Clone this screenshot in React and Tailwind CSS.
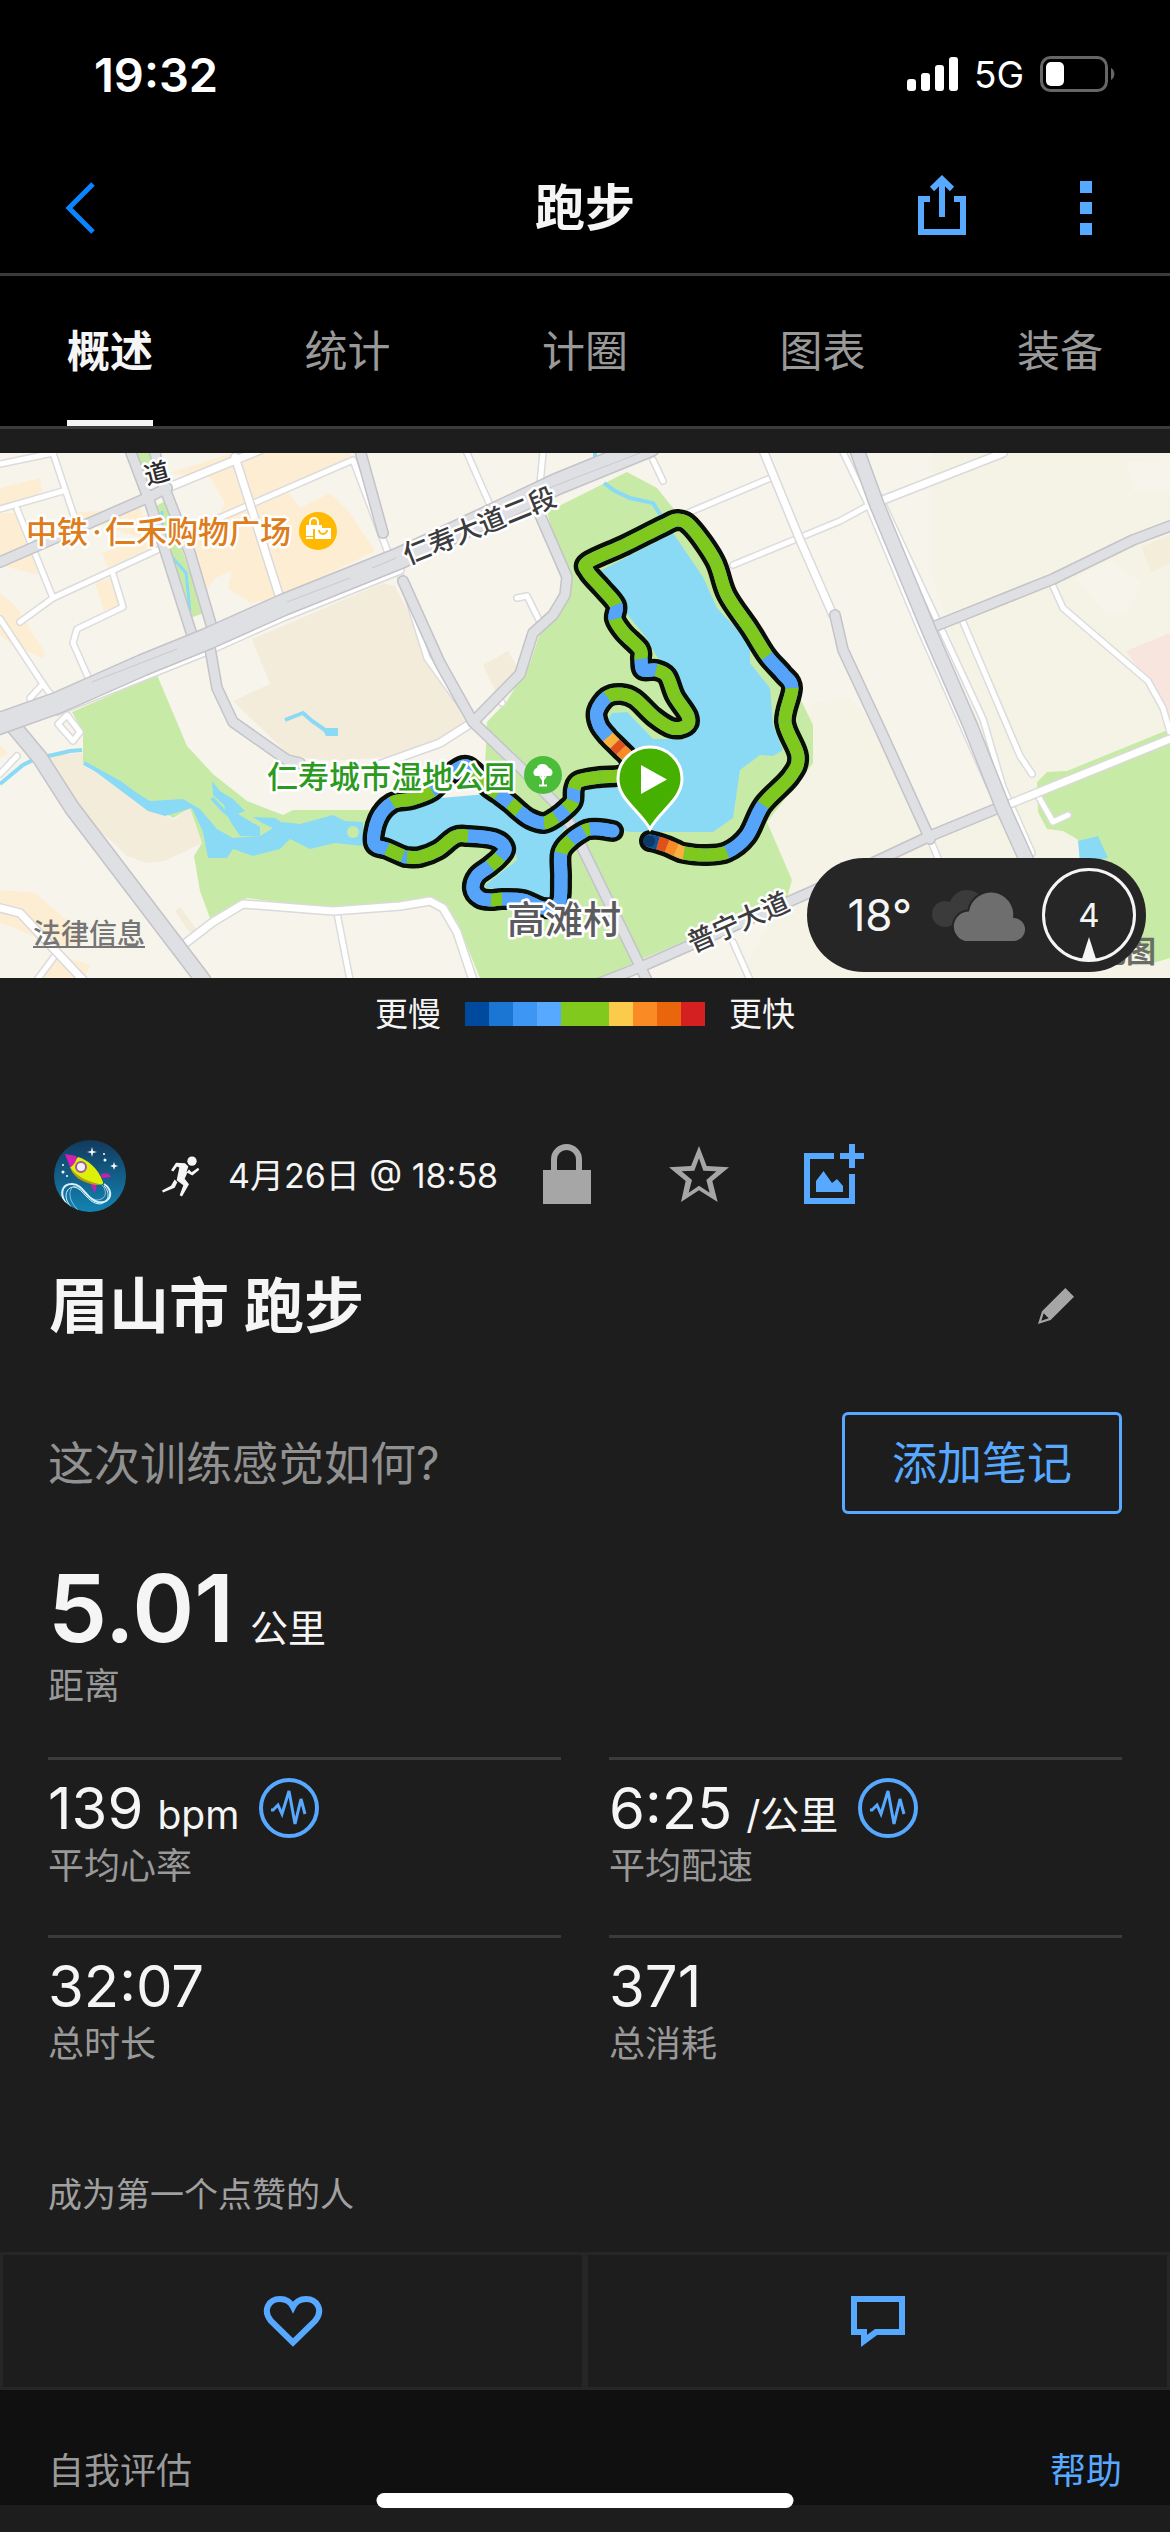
import React from 'react';

// Speed colours, slowest to fastest
const SPEED_COLORS = [
  'bg-[#004a9e]',
  'bg-[#1a76d2]',
  'bg-[#3d96f4]',
  'bg-[#57a8ff]',
  'bg-[#82c91e]',
  'bg-[#82c91e]',
  'bg-[#fbcb4b]',
  'bg-[#f98a24]',
  'bg-[#ea660c]',
  'bg-[#d42020]',
];

const TABS = ['概述', '统计', '计圈', '图表', '装备'];

const G = '#7fc81d';
const B = '#55a4fa';
const O = '#f98a24';
const R = '#e2501a';
const Y = '#fbb03b';

// Track points: x, y and the colour of the stretch that starts there
const LAKE_TRACK = [
  [650, 388, '#12508f'], [658, 390, R], [667, 393, O], [676, 397, Y], [684, 400, G], [705, 402, G], [727, 399, B],
  [747, 383, B], [763, 352, G], [790, 324, G], [798, 303, G], [785, 269, G], [792, 235, B],
  [783, 221, B], [767, 203, G], [750, 176, G], [727, 142, G], [715, 108, G], [692, 75, G],
  [678, 67, G], [663, 73, G], [625, 92, G], [588, 109, G], [588, 119, G], [602, 135, G],
  [616, 152, B], [615, 166, G], [624, 180, G], [640, 196, G], [641, 206, B], [643, 217, B],
  [656, 217, G], [667, 223, G], [675, 243, G], [688, 263, G], [686, 273, G], [672, 275, G],
  [654, 264, G], [635, 246, G], [621, 241, G], [607, 244, B], [597, 258, B], [599, 272, B],
  [608, 284, Y], [615, 291, R], [621, 297, O], [627, 303, G], [632, 312, G], [622, 322, G],
  [600, 324, G], [579, 328, G], [574, 336, B], [573, 348, G], [566, 356, B], [556, 364, G],
  [544, 370, B], [530, 366, B], [519, 358, G], [510, 350, B], [498, 341, G], [487, 333, G],
  [474, 318, B], [463, 313, B], [445, 325, B], [432, 338, G], [412, 346, G], [392, 350, B],
  [378, 366, B], [374, 390, B], [387, 396, G], [403, 403, B], [407, 404, G], [420, 404, G], [438, 397, G], [455, 384, G],
  [468, 383, B], [494, 386, B], [505, 395, B], [500, 404, G], [490, 413, B], [477, 423, B],
  [473, 436, B], [480, 445, B], [491, 447, G], [502, 446, B], [523, 447, B], [544, 455, B],
  [559, 450, B], [561, 425, B], [561, 400, G], [571, 387, B], [584, 378, G], [590, 376, B], [600, 376, B], [613, 378, B],
];

function segment(i) {
  const at = (n) => LAKE_TRACK[Math.max(0, Math.min(LAKE_TRACK.length - 1, n))];
  const [p0, p1, p2, p3] = [at(i - 1), at(i), at(i + 1), at(i + 2)];
  const c1 = [p1[0] + (p2[0] - p0[0]) / 6, p1[1] + (p2[1] - p0[1]) / 6];
  const c2 = [p2[0] - (p3[0] - p1[0]) / 6, p2[1] - (p3[1] - p1[1]) / 6];
  return { from: p1, curve: `C${c1} ${c2} ${p2[0]},${p2[1]}`, color: p1[2] };
}

const SEGMENTS = LAKE_TRACK.slice(0, -1).map((_, i) => segment(i));
const TRACK_PATH = `M650,388${SEGMENTS.map((s) => s.curve).join('')}`;

const WHITE_ROADS = [
  'M0 11 53 0 75 66',
  'M0 56 63 38',
  'M17 56 53 145',
  'M20 169 53 145 157 97',
  'M113 121 123 154 77 176 73 190 88 224',
  'M0 166 43 231 57 250',
  'M43 231 30 245 32 252',
  'M217 66 353 7 387 97',
  'M67 262 80 279 73 288 58 271Z',
  'M0 321 17 303',
  'M467 0 490 52',
  'M543 0 540 31',
  'M653 7 663 28',
  'M517 145 527 143 540 169',
  'M690 59 773 24',
  'M733 112 840 68 873 50',
  'M842 -3 867 49 920 176 990 334',
  'M880 45 938 169 983 266 1003 334 1032 400',
  'M930 386 940 410',
  'M963 169 1020 303 1032 321',
  'M1052 131 1063 155 1148 228 1163 255 1170 279',
  'M1037 341 1053 369 1068 362',
  'M733 489 750 527',
  'M337 460 350 527',
  'M57 500 37 527',
  'M387 97 403 128 427 205 473 269',
  'M501 248 502 250',
];

const WIDE_WHITE_ROADS = [
  'M167 35 260 -3',
  'M235 4 280 145',
  'M763 -3 800 87 833 162',
  'M883 47 1003 0',
  'M1007 352 1170 286',
  'M187 489 213 469 243 451 333 458 400 453 430 448 443 455 457 479 473 527',
  'M0 455 20 460 83 527',
  'M373 314 440 290 473 269',
  'M57 258 207 198 283 164 400 117',
];

const GREY_ROADS = [
  'M0 109 147 45 167 35',
  'M130 -3 150 50 192 182',
  'M155 0 163 31 190 100 213 178',
  'M210 195 217 235 233 269 287 307 300 310',
  'M360 -3 383 80',
  'M403 128 440 210 473 269 520 314 560 355 573 376 640 513 650 534',
  'M540 62 567 124 565 142 553 162 533 180 520 221 473 269',
  'M835 162 843 197 880 276 930 386',
  'M933 174 963 162 1053 126 1133 87 1170 73',
  'M590 534 643 513 813 438 930 383 1003 353',
];

function Roads({ paths, casing, fill, width }) {
  return (
    <g fill="none" strokeLinecap="round" strokeLinejoin="round">
      {paths.map((d) => <path key={d} d={d} stroke={casing} strokeWidth={width + 3} />)}
      {paths.map((d) => <path key={d} d={d} stroke={fill} strokeWidth={width} />)}
    </g>
  );
}

function RouteMap() {
  return (
    <svg viewBox="0 0 1170 525" className="block w-full h-auto" role="img" aria-label="路线地图">
      <rect width="1170" height="525" fill="#f7f4ec" />

      {/* Land use */}
      <path fill="#f5f3e5" d="M932 0H1170V525H740L792 427 767 369 813 250 850 245 880 276 930 386 1003 353 932 120Z" />
      <path fill="#f7f4ec" d="M1126 10 1170 6V38H1134ZM1075 125 1110 108 1142 130 1128 160 1105 160Z" />
      <path fill="#f3edda" d="M1141 94 1170 82V110L1152 119Z" />
      <path fill="#f8e5dd" d="M1126 198 1170 180V269L1148 228Z" />
      <path fill="#f4ecda" d="M252 186 383 130 395 133 465 269 440 288 400 303 333 308 290 303 233 248 270 231Z" />
      <path fill="#f4ecda" d="M37 303 83 300 87 314 173 367 190 355 202 390 165 408 147 410 127 403 117 393 72 355Z" />
      <path fill="#f4ecda" d="M483 212 508 198 520 218 495 238ZM175 458 180 454 198 478 192 483Z" />
      <path fill="#fdeed3" d="M0 35 40 25 42 38 20 52 0 56ZM0 60 15 60 35 110 38 122 0 112ZM0 140 15 152 45 200 42 205 10 190 0 182Z" />
      <path fill="#fdeed3" d="M170 20 232 0 350 0 353 7 285 35 300 55 330 40 350 60 375 98 280 145 250 150 228 135 232 118 215 125 205 140 180 75 217 66 225 50 210 25Z" />
      <path fill="#fdeed3" d="M95 130 113 124 122 152 104 158ZM65 60 140 55 157 92 108 115 102 100 140 85ZM0 437 35 440 70 470 83 490 60 495 15 475 0 470ZM60 502 90 512 85 525 40 525ZM0 292 8 300 0 305Z" />

      {/* Parks */}
      <g fill="#c7eba6">
        <path d="M72 259 157 222 187 293 213 321 247 348 283 362 293 357H483L487 269 507 248 530 210 540 180 557 162 570 142 547 59 627 19 657 35 690 76 770 190 800 245 813 272V310L767 369 792 427 787 445 640 507 600 525H480L457 469 440 451 333 457 247 445 210 465 200 438 194 403 202 390 190 355 173 365 83 310V279Z" />
        <path d="M1037 329 1047 319 1067 318 1170 276V505L1153 510 1090 410 1077 386 1063 378 1047 376 1038 359Z" />
        <path d="M136 0H150L155 30H143ZM153 55 165 48 204 160 190 165Z" />
      </g>

      {/* Water */}
      <g fill="#8bdaf5">
        <path d="M84 310 120 330 150 348 183 346 200 356 217 376 233 385 260 383 283 369 300 371 333 362 345 368 363 369V393L335 390 310 396 290 386 280 396 253 403 233 396 227 405H208L203 379 192 355 165 363 148 358Z" />
        <path d="M212 328 220 338 233 346 245 358 238 361 260 374V383H240L230 368 224 352 213 342Z" />
        <path d="M253 364 275 365 287 373 281 379 262 370Z" />
        <path d="M600 118 673 80 703 124 717 155 750 190 750 210 770 235 773 272 783 297 773 303 760 302 740 317 733 365 713 379H630L573 369 580 338 620 331 633 307 607 268 612 260 627 259 653 286H685L697 269 673 217 657 204 647 186 620 152Z" />
        <path d="M387 355 440 345 487 341 540 369 575 360 553 393V448L527 441 483 434 517 407 513 386 460 376 413 403 378 390Z" />
        <path d="M1078 388 1098 383 1108 405 1080 410ZM322 275H338V283H326Z" />
      </g>
      <circle cx="353" cy="379" r="6" fill="#c7eba6" />
      <g fill="none" stroke="#8bdaf5" strokeWidth="4">
        <path d="M0 331 23 312 37 305 53 302 70 298 82 297" />
        <path d="M84 310 120 330 155 356M212 345 222 356 230 363" />
        <path d="M285 267 295 263 303 260 312 268 325 277" />
        <path d="M604 30 615 38 630 45 653 50 663 66M595 0V5" />
        <path d="M162 58V80L172 104 186 120 190 158" strokeWidth="3" />
      </g>

      <Roads paths={WHITE_ROADS} casing="#dcdcdc" fill="#ffffff" width={5} />
      <Roads paths={WIDE_WHITE_ROADS} casing="#dadada" fill="#ffffff" width={7} />
      <Roads paths={GREY_ROADS} casing="#c3c3c8" fill="#dfe0e4" width={9} />
      <Roads paths={['M857 -3 877 52 930 180 970 272 1003 355 1030 415']} casing="#c3c3c8" fill="#dfe0e4" width={13} />
      <Roads paths={['M10 269 40 305 72 355 203 527']} casing="#c3c3c8" fill="#dfe0e4" width={14} />
      <Roads
        paths={['M-5 272 57 250 143 212 207 186 283 152 400 105 557 31 650 -7']}
        casing="#c3c3c8"
        fill="#dfe0e4"
        width={20}
      />
      <path d="M92 229 177 196M287 149 350 125M372 115 396 105M510 50 640 0" stroke="#c9c9ce" fill="none" />

      {/* Track */}
      <path d={TRACK_PATH} fill="none" stroke="#0a0f08" strokeWidth="22" strokeLinecap="round" strokeLinejoin="round" />
      <path d={TRACK_PATH} fill="none" stroke={B} strokeWidth="13" strokeLinecap="round" strokeLinejoin="round" />
      {SEGMENTS.map((s, i) => (
        <path key={i} d={`M${s.from[0]},${s.from[1]}${s.curve}`} fill="none" stroke={s.color} strokeWidth="13" />
      ))}
      <circle cx="649" cy="388" r="6" fill="#0b3a6a" />

      {/* Place names */}
      <g
        stroke="#ffffff"
        strokeWidth="5"
        strokeLinejoin="round"
        paintOrder="stroke"
        fontWeight="500"
        fontFamily='"Noto Sans CJK SC", sans-serif'
      >
        <text x="26" y="90" fontSize="31" fill="#dd7d1b">中铁</text>
        <text x="97" y="90" textAnchor="middle" fontSize="31" fill="#dd7d1b" fontFamily="Inter, sans-serif">·</text>
        <text x="105" y="90" fontSize="31" fill="#dd7d1b">仁禾购物广场</text>
        <text x="267" y="335" fontSize="31" fill="#2c9a21">仁寿城市湿地公园</text>
        <text x="507" y="480" fontSize="38" fill="#5b5b5e">高滩村</text>
        <text transform="translate(408 112) rotate(-22)" fontSize="27" fill="#3c3c3e">仁寿大道二段</text>
        <text transform="translate(693 500) rotate(-24)" fontSize="27" fill="#3c3c3e">普宁大道</text>
        <text transform="translate(147 32) rotate(-15)" fontSize="25" fill="#2c2c2e">道</text>
      </g>
      <text x="1156" y="509" textAnchor="end" fontSize="30" fill="#6a6c66" fontWeight="700" fontFamily='"Noto Sans CJK SC", sans-serif'>地图</text>

      {/* Shopping badge */}
      <g transform="translate(318 78)">
        <circle r="19" fill="#ffb902" />
        <path d="M-12 -6H4V-2H-5V5H-12ZM-12 6H-5V8H-12ZM-3 -3H13V8H-3Z" fill="#fff" />
        <path d="M-8 -6V-9a4 4 0 0 1 8 0V-6" fill="none" stroke="#fff" strokeWidth="2" />
        <path d="M1 -1a4 4 0 0 0 8 0" fill="none" stroke="#ffb902" strokeWidth="2" />
      </g>

      {/* Park badge */}
      <g transform="translate(543 322)">
        <circle r="19" fill="#4cbd3b" />
        <path d="M0 -11c4 0 5 3 6 4 4 1 5 7 1 8H-7c-4-1-3-7 1-8 0-2 2-4 6-4Z" fill="#fff" />
        <path d="M0 0V10M-4 10.500H4M-3 1 0 5 3 1" stroke="#fff" strokeWidth="2" fill="none" />
      </g>

      {/* Start pin */}
      <path
        d="M650 376C640 358 618 346 618 326a32 32 0 0 1 64 0C682 346 660 358 650 376Z"
        fill="#45b000"
        stroke="#fff"
        strokeWidth="3"
      />
      <path d="M641 312 667 326.500 641 341Z" fill="#fff" />
    </svg>
  );
}

function StatusBar() {
  return (
    <div className="flex items-center justify-between h-[142px] pt-[6px] pl-[94px] pr-[54px]">
      <span className="text-[47px] leading-none font-semibold text-white">19:32</span>
      <div className="flex items-center gap-4">
        <svg className="w-[51px] h-[34px]" viewBox="0 0 51 34" fill="#fff">
          <rect y="22" width="9" height="12" rx="3" />
          <rect x="14" y="16" width="9" height="18" rx="3" />
          <rect x="28" y="8" width="9" height="26" rx="3" />
          <rect x="42" width="9" height="34" rx="3" />
        </svg>
        <span className="text-[37px] leading-none text-white">5G</span>
        <svg className="w-[76px] h-9" viewBox="0 0 76 36">
          <rect x="1.500" y="1.500" width="65" height="33" rx="9" fill="none" stroke="#666" strokeWidth="3" />
          <rect x="6" y="6" width="18" height="24" rx="5" fill="#fff" />
          <path d="M71 12a7 7 0 0 1 0 12Z" fill="#666" />
        </svg>
      </div>
    </div>
  );
}

function Header() {
  return (
    <header className="grid grid-cols-3 items-center h-[134px] pl-[64px] pr-[78px] border-b-[3px] border-[#3b3b3b]">
      <button aria-label="返回" className="justify-self-start">
        <svg className="w-8 h-[52px]" viewBox="0 0 32 52" fill="none" stroke="#0a84ff" strokeWidth="5">
          <path d="M29 2 5 26 29 50" />
        </svg>
      </button>
      <h1 className="justify-self-center pl-[14px] text-[50px] leading-none font-semibold text-[#f5f5f5]">跑步</h1>
      <div className="flex items-end gap-[114px] justify-self-end pb-[6px]">
        <button aria-label="分享">
          <svg className="w-12 h-[60px]" viewBox="0 0 48 60" fill="none" stroke="#57a8ff" strokeWidth="6">
            <path d="M12 24H3V57H45V24H36M24 4V42M14 14 24 4.200 34 14" />
          </svg>
        </button>
        <button aria-label="更多">
          <svg className="w-3 h-[54px]" viewBox="0 0 12 54" fill="#57a8ff">
            <path d="M0 0H12V12H0ZM0 21H12V33H0ZM0 42H12V54H0Z" />
          </svg>
        </button>
      </div>
    </header>
  );
}

function WeatherPill() {
  return (
    <div className="absolute right-6 bottom-[6px] flex items-center h-[114px] pl-10 pr-[10px] rounded-full bg-[#262626]">
      <span className="text-[44px] leading-none text-[#f5f5f5]">18°</span>
      <svg className="ml-5 w-[93px] h-[52px]" viewBox="0 0 93 52">
        <g fill="#3b3b3b">
          <circle cx="35" cy="19" r="18" />
          <circle cx="13" cy="25" r="13" />
        </g>
        <path
          d="M33 52a15 15 0 0 1 4-29.500A22 22 0 0 1 81 29 11.500 11.500 0 0 1 82 52Z"
          fill="#6e6e6e"
          stroke="#262626"
          strokeWidth="4"
          paintOrder="stroke"
        />
      </svg>
      <div className="relative ml-[17px] flex items-center justify-center w-[94px] h-[94px] rounded-full border-[3px] border-[#f5f5f5]">
        <span className="text-[33px] leading-none text-[#f5f5f5]">4</span>
        <svg className="absolute bottom-0 w-4 h-[22px]" viewBox="0 0 16 22" fill="#f5f5f5">
          <path d="M8 0 15 22H1Z" />
        </svg>
      </div>
    </div>
  );
}

function Avatar() {
  return (
    <svg className="w-[72px] h-[72px] rounded-full" viewBox="0 0 72 72">
      <defs>
        <linearGradient id="sky" x1="0" y1="0" x2="0" y2="1">
          <stop offset="0" stopColor="#123a5c" />
          <stop offset="1" stopColor="#1284b4" />
        </linearGradient>
      </defs>
      <rect width="72" height="72" fill="url(#sky)" />
      <g fill="none" stroke="#d9f0fa" strokeWidth="2">
        <path d="M14 66C4 54 8 44 18 44 30 44 32 60 44 62 58 64 60 50 50 44" />
        <path d="M18 68C8 58 12 47 20 47 29 48 34 64 46 64 56 62 56 52 50 46" strokeWidth="1" />
        <path d="M24 70C14 60 14 50 20 46 28 47 32 58 42 60 52 60 54 52 48 45" strokeWidth="1" opacity="0.600" />
      </g>
      <path d="M47 34C52 32 56 34 57 37L48 38ZM36 43 41 53 43 43Z" fill="#c71fb0" />
      <path d="M24 17C34 20 44 28 49 42 50 45 46 45 42 44 30 42 20 36 16 27Z" fill="#dff008" />
      <path d="M16 27C22 36 32 41 45 44L42 45C28 43 18 36 16 27Z" fill="#b3a10a" />
      <path d="M11 14 22 16C25 18 18 28 16 27Z" fill="#d31fb4" />
      <circle cx="27" cy="27" r="5" fill="#f4f0fa" stroke="#a05a9a" strokeWidth="2" />
      <g fill="#fff">
        <path d="M38 7 39 11 43 12 39 13 38 17 37 13 33 12 37 11ZM60 22 61 25 64 26 61 27 60 30 59 27 56 26 59 25Z" />
        <circle cx="51" cy="20" r="1.500" />
        <circle cx="50" cy="14" r="1" />
        <circle cx="9" cy="25" r="1" />
        <circle cx="9" cy="32" r="1.500" />
        <circle cx="13" cy="36" r="1" />
      </g>
    </svg>
  );
}

function ActivityMeta() {
  return (
    <div className="flex items-center mt-[108px] pl-[54px] h-[72px]">
      <Avatar />
      <svg className="ml-9 w-[38px] h-[41px]" viewBox="0 0 114 122" fill="#f5f5f5">
        <circle cx="90" cy="15" r="14" />
        <path d="M27 42 42 20 69 21 79 31 73 49 81 40 89 48 108 35 112 41 91 58 76 50 68 68 81 84 60 121 53 117 64 87 44 72 52 34 45 31 34 46Z" />
        <path d="M38 70 46 78 38 95 3 109 0 103 27 89Z" />
      </svg>
      <span className="ml-7 text-[34px] leading-none text-[#f5f5f5]">4月26日 @ 18:58</span>
      <div className="flex items-center ml-auto mr-[306px] pb-1">
        <svg className="w-12 h-[60px]" viewBox="0 0 48 60" role="img" aria-label="私密">
          <path d="M11 28V15.500a12.500 12.500 0 0 1 25 0V28" fill="none" stroke="#a6a6a6" strokeWidth="6" />
          <path d="M0 26H48V60H0Z" fill="#a6a6a6" />
        </svg>
        <button aria-label="收藏" className="ml-[78px]">
          <svg className="w-[60px] h-14" viewBox="0 0 180 168" fill="#a6a6a6" fillRule="evenodd">
            <path d="M90 0 113 60 180 64 130 105 146 168 90 133 36 168 50 105 0 64 66 60ZM90 37 76 74 38 76 69 102 59 140 90 119 122 140 112 102 142 76 103 74Z" />
          </svg>
        </button>
        <button aria-label="添加照片" className="ml-[75px]">
          <svg className="w-[60px] h-[60px]" viewBox="0 0 60 60">
            <path d="M30 12H3V57H48V30M36 12H60M48 0V24" fill="none" stroke="#57a8ff" strokeWidth="6" />
            <path d="M12 37 19.500 27 28 39 33 35 39 42V48H12Z" fill="#57a8ff" />
          </svg>
        </button>
      </div>
    </div>
  );
}

function PulseButton({ label }) {
  return (
    <button aria-label={label} className="self-center ml-5">
      <svg className="w-[60px] h-[60px]" viewBox="0 0 60 60" fill="none" stroke="#57a8ff">
        <circle cx="30" cy="30" r="28" strokeWidth="4" />
        <path d="M12 32H14L19 27 23 36 30 13 36 46 42 21 46 36" strokeWidth="3" />
      </svg>
    </button>
  );
}

function Stat({ value, unit, label, pulse }) {
  return (
    <div className="h-[178px] pt-[18px] border-t-[3px] border-[#3b3b3b]">
      <dd className="flex items-baseline h-[60px] text-[#f5f5f5]">
        <span className="text-[58px] leading-[60px]">{value}</span>
        {unit && <span className="ml-[14px] text-[39px] leading-[60px]">{unit}</span>}
        {pulse && <PulseButton label={`${label}图表`} />}
      </dd>
      <dt className="mt-2 text-[36px] leading-[40px] text-[#999999]">{label}</dt>
    </div>
  );
}

export default function App() {
  return (
    <div className="relative min-h-screen bg-[#1d1d1d] font-[Inter,'Noto_Sans_CJK_SC',sans-serif]">
      <div className="bg-black">
        <StatusBar />
        <Header />
        <nav className="flex justify-between h-[153px] px-[67px] border-b-[3px] border-[#3b3b3b]">
          {TABS.map((tab, i) => (
            <button
              key={tab}
              className={
                i === 0
                  ? 'text-[43px] leading-none font-semibold text-[#f5f5f5] border-y-[6px] border-t-transparent border-b-[#f5f5f5]'
                  : 'text-[43px] leading-none text-[#999999] border-y-[6px] border-transparent'
              }
            >
              {tab}
            </button>
          ))}
        </nav>
      </div>

      <main>
        {/* Map with the weather on top */}
        <section className="relative mt-6 overflow-hidden">
          <RouteMap />
          <a href="#legal" className="absolute left-[33px] bottom-7 text-[28px] leading-[32px] font-medium text-[#757575] underline">
            法律信息
          </a>
          <WeatherPill />
        </section>

        <div className="flex items-center justify-center gap-6 mt-[18px] h-9 text-[33px] leading-9 text-[#f5f5f5]">
          <span>更慢</span>
          <div className="flex">
            {SPEED_COLORS.map((color, i) => (
              <span key={i} className={`w-6 h-6 ${color}`} />
            ))}
          </div>
          <span>更快</span>
        </div>

        <ActivityMeta />

        <div className="flex items-center justify-between mt-[64px] pl-[49px] pr-24 h-[60px]">
          <h2 className="text-[60px] leading-none font-semibold text-[#f5f5f5]">眉山市 跑步</h2>
          <button aria-label="编辑名称">
            <svg className="w-9 h-9" viewBox="0 0 108 108" fill="#a6a6a6" fillRule="evenodd">
              <path d="M82 0 108 26 38 96 0 108 12 70ZM17 76 10 98 32 91Z" />
            </svg>
          </button>
        </div>

        <div className="flex items-center justify-between mt-[76px] px-12">
          <p className="text-[46px] leading-none text-[#919191]">这次训练感觉如何?</p>
          <button className="h-[102px] px-[47px] rounded-md border-[3px] border-[#57a8ff] text-[45px] leading-none text-[#57a8ff]">
            添加笔记
          </button>
        </div>

        <dl className="px-12">
          <div className="h-[243px] pt-[46px]">
            <dd className="flex items-baseline h-[96px] text-[#f5f5f5]">
              <span className="text-[94px] leading-[96px] font-semibold">5.01</span>
              <span className="ml-4 text-[38px] leading-[96px]">公里</span>
            </dd>
            <dt className="mt-3 text-[36px] leading-[36px] text-[#999999]">距离</dt>
          </div>
          <div className="grid grid-cols-2 gap-x-12">
            <Stat value="139" unit="bpm" label="平均心率" pulse />
            <Stat value="6:25" unit="/公里" label="平均配速" pulse />
            <Stat value="32:07" label="总时长" />
            <Stat value="371" label="总消耗" />
          </div>
        </dl>

        <p className="mt-[64px] px-12 text-[34px] leading-9 text-[#a0a0a0]">成为第一个点赞的人</p>

        <div className="grid grid-cols-2 mt-[39px] h-[138px]">
          <button aria-label="点赞" className="flex items-center justify-center border-[3px] border-[#262626]">
            <svg className="w-[60px] h-[51px]" viewBox="0 0 60 51" fill="none" stroke="#57a8ff" strokeWidth="6">
              <path d="M30 46.500 8 25C-1 14 6 3 17 3 24 3 28 7 30 11 32 7 36 3 43 3 54 3 61 14 52 25Z" />
            </svg>
          </button>
          <button aria-label="评论" className="flex items-center justify-center border-[3px] border-[#262626]">
            <svg className="w-[54px] h-[51px]" viewBox="0 0 54 51" fill="none" stroke="#57a8ff" strokeWidth="6">
              <path d="M3 3H51V36H25L13 45V36H3Z" />
            </svg>
          </button>
        </div>

        <div className="flex items-end justify-between h-[115px] px-12 pb-4 bg-[#101010] text-[36px] leading-9">
          <span className="text-[#999999]">自我评估</span>
          <a href="#help" className="text-[#57a8ff]">帮助</a>
        </div>
      </main>

      {/* Home indicator */}
      <div className="absolute bottom-6 left-1/2 -translate-x-1/2 w-[417px] h-[15px] rounded-full bg-white" />
    </div>
  );
}
